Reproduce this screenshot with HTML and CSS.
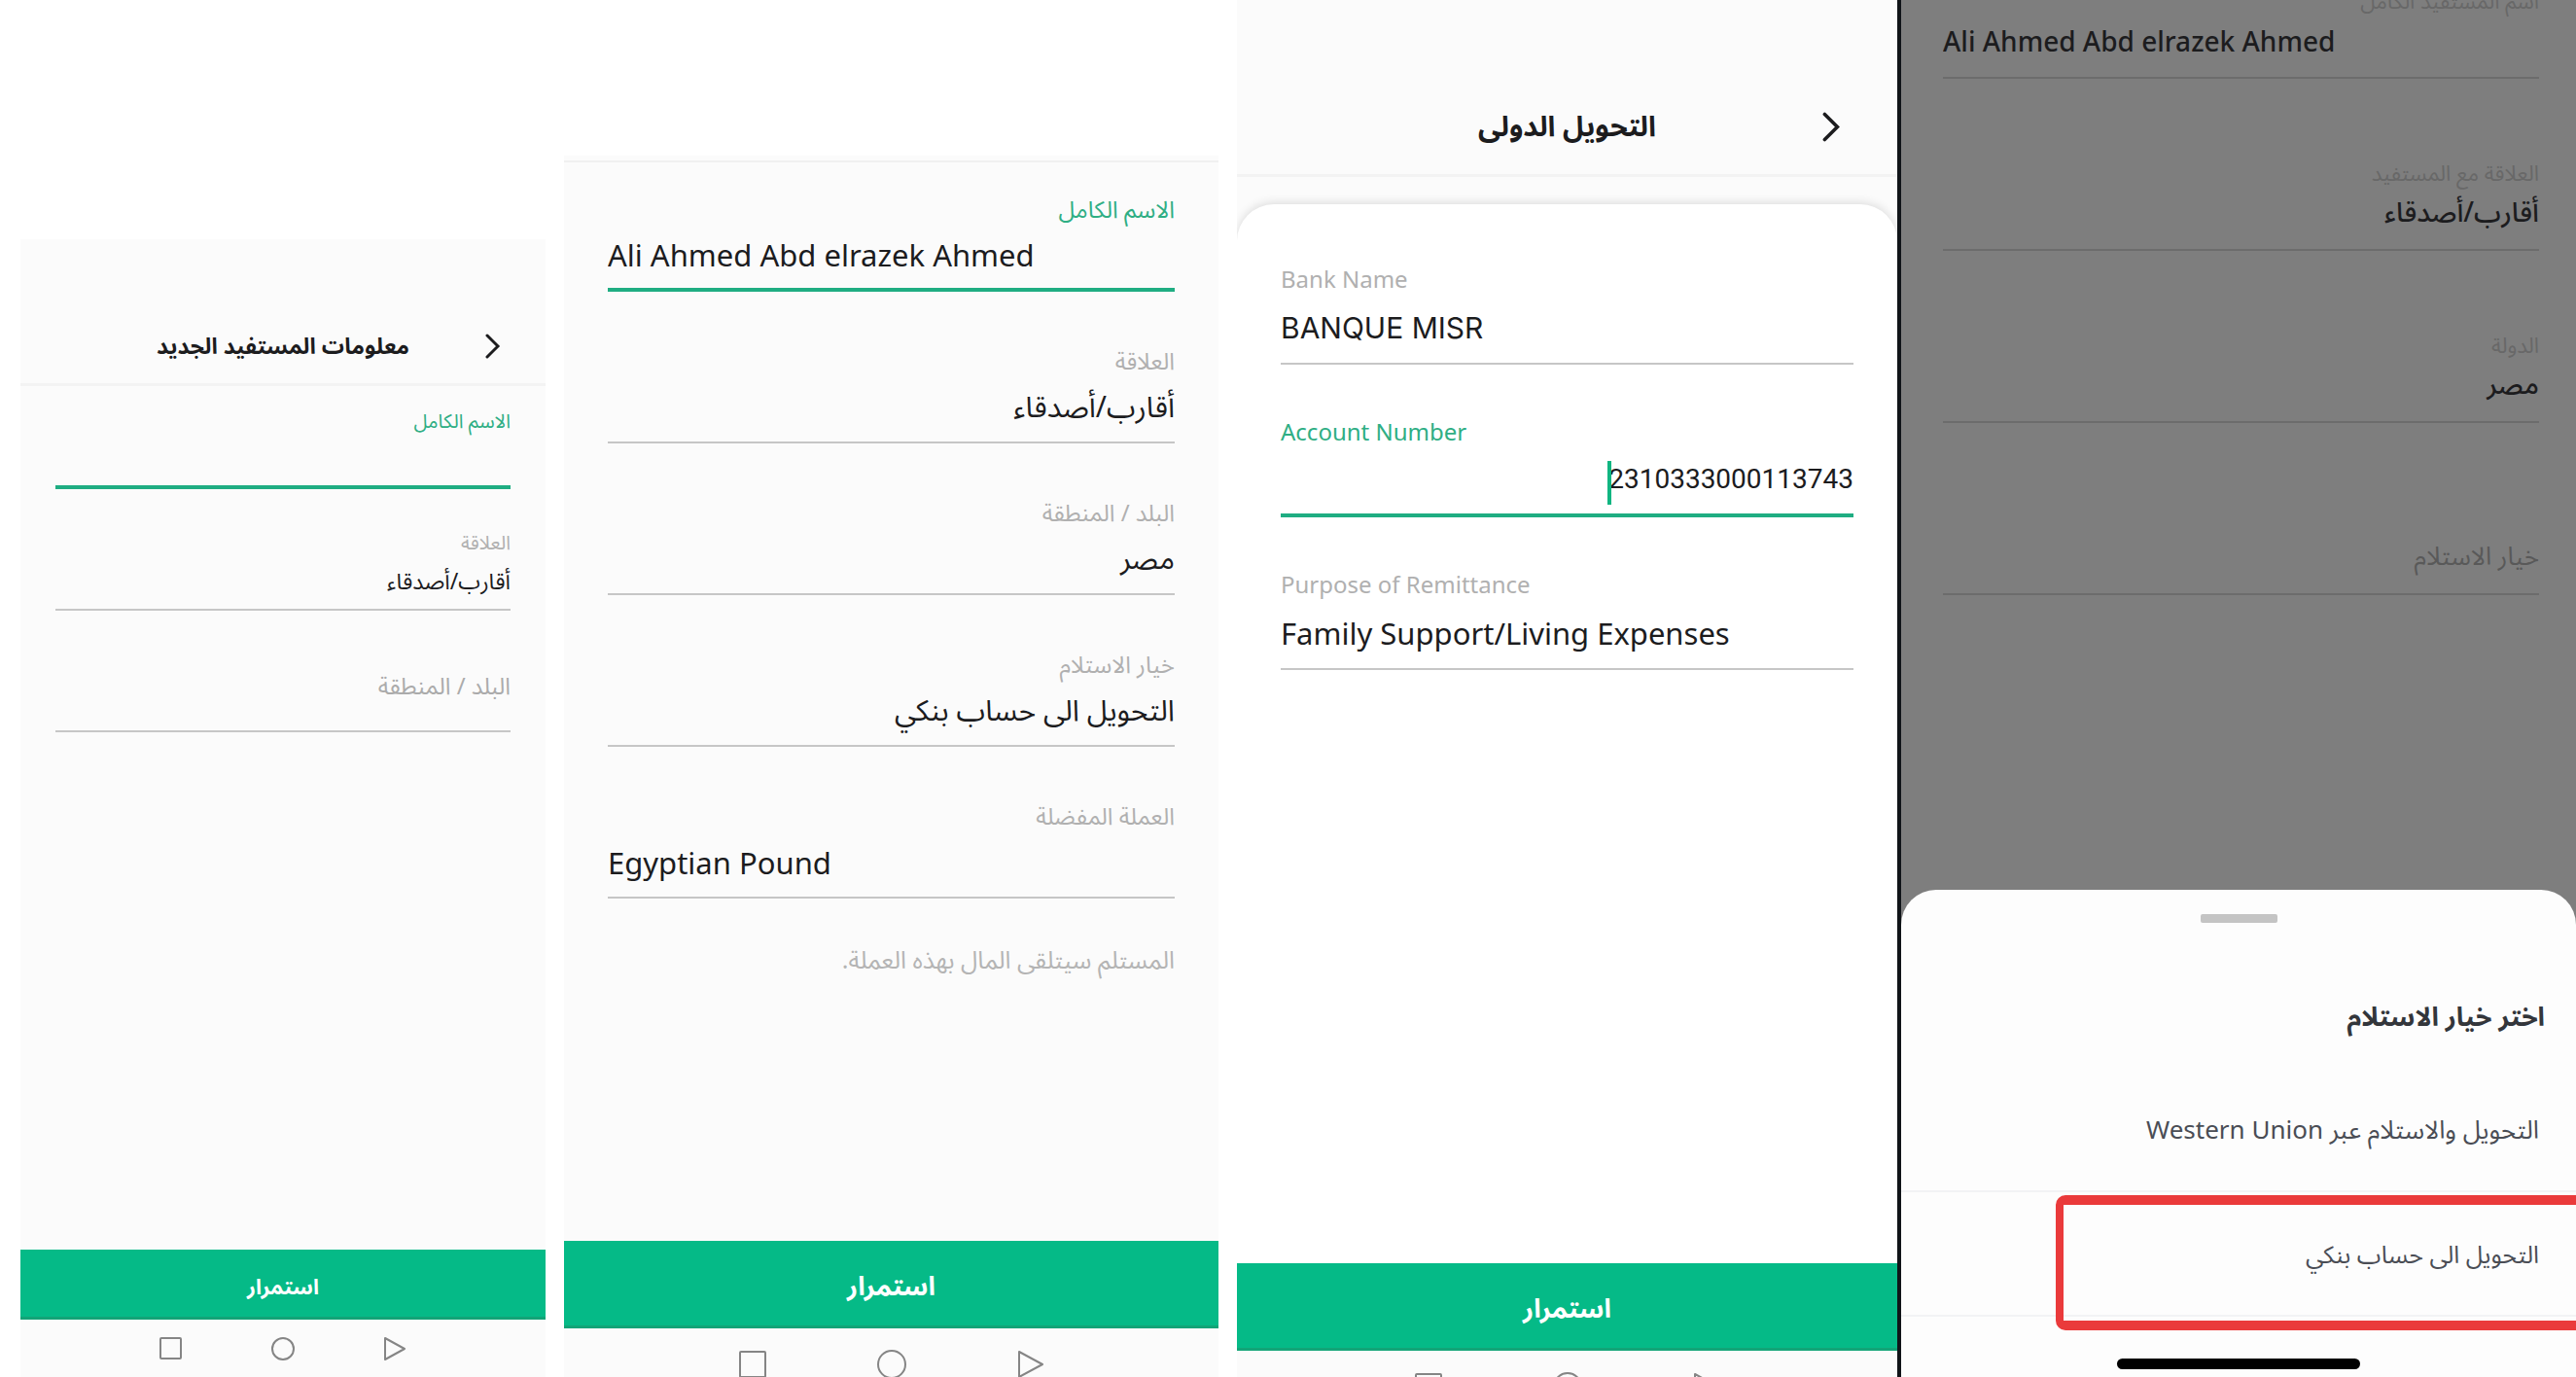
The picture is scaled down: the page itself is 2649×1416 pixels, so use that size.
FILE: index.html
```html
<!DOCTYPE html>
<html lang="ar">
<head>
<meta charset="utf-8">
<meta name="viewport" content="width=device-width, initial-scale=1">
<title>التحويل الدولى</title>
<link rel="stylesheet" href="styles.css">
</head>
<body>
<main class="board">

  <section class="screen screen-new" dir="rtl">
    <header class="topbar">
      <button class="back" type="button" aria-label="رجوع"><svg viewBox="0 0 16 26"><path d="M2 2l11 11L2 24"/></svg></button>
      <h1 class="title">معلومات المستفيد الجديد</h1>
    </header>
    <form class="fields">
      <div class="field active"><label for="n1">الاسم الكامل</label><input id="n1" type="text"></div>
      <div class="field"><label for="n2">العلاقة</label><input id="n2" type="text" value="أقارب/أصدقاء"></div>
      <div class="field"><input class="empty" type="text" aria-label="البلد / المنطقة" placeholder="البلد / المنطقة"></div>
    </form>
    <button class="continue" type="button">استمرار</button>
    <nav class="sysnav">
      <svg viewBox="0 0 24 26"><path d="M2 2l20 11L2 24z"/></svg>
      <svg viewBox="0 0 24 26"><ellipse cx="12" cy="13" rx="11" ry="11"/></svg>
      <svg viewBox="0 0 24 26"><rect x="1" y="2" width="21" height="21" rx="1"/></svg>
    </nav>
  </section>

  <section class="screen screen-details" dir="rtl">
    <form class="fields">
      <div class="field active"><label for="d1">الاسم الكامل</label><input id="d1" class="latin" type="text" dir="ltr" value="Ali Ahmed Abd elrazek Ahmed"></div>
      <div class="field"><label for="d2">العلاقة</label><input id="d2" type="text" value="أقارب/أصدقاء"></div>
      <div class="field"><label for="d3">البلد / المنطقة</label><input id="d3" type="text" value="مصر"></div>
      <div class="field"><label for="d4">خيار الاستلام</label><input id="d4" type="text" value="التحويل الى حساب بنكي"></div>
      <div class="field"><label for="d5">العملة المفضلة</label><input id="d5" class="latin" type="text" dir="ltr" value="Egyptian Pound"></div>
    </form>
    <p class="hint">المستلم سيتلقى المال بهذه العملة.</p>
    <button class="continue" type="button">استمرار</button>
    <nav class="sysnav">
      <svg viewBox="0 0 28 30"><path d="M2 2l24 13L2 28z"/></svg>
      <svg viewBox="0 0 28 30"><ellipse cx="14" cy="15" rx="14" ry="14"/></svg>
      <svg viewBox="0 0 28 30"><rect x="1" y="2" width="26" height="26" rx="1"/></svg>
    </nav>
  </section>

  <section class="screen screen-bank" dir="rtl">
    <header class="topbar">
      <button class="back" type="button" aria-label="رجوع"><svg viewBox="0 0 16 26"><path d="M2 2l11 11L2 24"/></svg></button>
      <h1 class="title">التحويل الدولى</h1>
    </header>
    <div class="card">
      <form class="fields" dir="ltr">
        <div class="field"><label for="b1">Bank Name</label><input id="b1" class="plain" type="text" value="BANQUE MISR"></div>
        <div class="field active"><label for="b2">Account Number</label><input id="b2" class="digits" type="text" dir="rtl" value="2310333000113743"><span class="caret"></span></div>
        <div class="field"><label for="b3">Purpose of Remittance</label><input id="b3" class="latin" type="text" value="Family Support/Living Expenses"></div>
      </form>
    </div>
    <button class="continue" type="button">استمرار</button>
    <nav class="sysnav">
      <svg viewBox="0 0 28 30"><path d="M2 2l24 13L2 28z"/></svg>
      <svg viewBox="0 0 28 30"><ellipse cx="14" cy="15" rx="14" ry="14"/></svg>
      <svg viewBox="0 0 28 30"><rect x="1" y="2" width="26" height="26" rx="1"/></svg>
    </nav>
  </section>

  <section class="screen screen-sheet" dir="rtl">
    <form class="fields">
      <div class="field"><label for="s1">اسم المستفيد الكامل</label><input id="s1" type="text" dir="ltr" value="Ali Ahmed Abd elrazek Ahmed"></div>
      <div class="field"><label for="s2">العلاقة مع المستفيد</label><input id="s2" type="text" value="أقارب/أصدقاء"></div>
      <div class="field"><label for="s3">الدولة</label><input id="s3" type="text" value="مصر"></div>
      <div class="field"><input class="empty" type="text" aria-label="خيار الاستلام" placeholder="خيار الاستلام"></div>
    </form>
    <div class="sheet">
      <span class="handle"></span>
      <h2 class="sheet-title">اختر خيار الاستلام</h2>
      <button class="option" type="button">التحويل والاستلام عبر Western Union</button>
      <button class="option marked" type="button">التحويل الى حساب بنكي</button>
      <span class="home"></span>
    </div>
  </section>

</main>
</body>
</html>
```
FILE: styles.css
```css
* { box-sizing: border-box; }

body {
  margin: 0;
  background: #fff;
  color: #1c1c1e;
  font-family: "Noto Sans", "Noto Sans Arabic", "DejaVu Sans", sans-serif;
}

button, input { font-family: inherit; color: inherit; margin: 0; }

.board {
  display: flex;
  min-height: 100vh;
  padding-left: 21px;
  overflow: hidden;
}

.screen {
  display: flex;
  flex-direction: column;
  min-width: 0;
  background: #fbfbfb;
}

/* header */
.topbar {
  display: grid;
  grid-template-columns: 1fr auto 1fr;
  align-items: center;
  border-bottom: 3px solid #f3f3f3;
}
.back {
  justify-self: start;
  display: flex;
  padding: 0;
  border: 0;
  background: none;
}
.back svg {
  width: 16px;
  height: 26px;
  fill: none;
  stroke: #1c1c1e;
  stroke-width: 3;
  stroke-linecap: round;
}
.title { margin: 0; font-weight: 700; white-space: nowrap; }

/* form fields */
.fields { display: flex; flex-direction: column; }
.field {
  position: relative;
  display: flex;
  flex-direction: column;
  justify-content: flex-end;
}
.field label {
  height: 24px;
  line-height: 22px;
  font-size: 24px;
  color: #b0b0b0;
  white-space: nowrap;
}
.field input {
  width: 100%;
  padding: 0;
  border: 0;
  border-bottom: 2px solid #c6c6c6;
  border-radius: 0;
  background: none;
  font-size: 30px;
  outline: 0;
}
.field input::placeholder { color: #ababab; opacity: 1; }
.field.active label { color: #2fae84; }
.field.active input { border-bottom: 4px solid #1fad82; }
.field .latin { font-size: 31px; }
.caret {
  position: absolute;
  right: 249px;
  bottom: 13px;
  width: 4px;
  height: 45px;
  background: #10b581;
}

/* primary button and system navigation */
.continue {
  margin-top: auto;
  padding: 8px 0 0;
  border: 0;
  border-bottom: 3px solid #12a477;
  background: #05ba87;
  color: #fff;
  font-weight: 700;
}
.sysnav {
  display: flex;
  justify-content: center;
  align-items: flex-start;
  overflow: hidden;
}
.sysnav svg {
  overflow: visible;
  fill: none;
  stroke: #858585;
  stroke-width: 2;
  stroke-linejoin: round;
}

/* new beneficiary */
.screen-new { flex: 540 1 0; margin-top: 246px; }
.screen-new .topbar { height: 151px; padding: 72px 46px 0; }
.screen-new .title { font-size: 23px; }
.screen-new .fields { gap: 47px; padding: 28px 36px 0; }
.screen-new .field { height: 78px; }
.screen-new .field label { height: 20px; line-height: 16px; font-size: 20px; }
.screen-new .field input { height: 58px; font-size: 23px; }
.screen-new .field .empty { height: 78px; padding-bottom: 18px; font-size: 24px; }
.screen-new .continue { height: 72px; font-size: 22px; }
.screen-new .sysnav { height: 59px; padding-top: 17px; gap: 91px; }
.screen-new .sysnav svg { width: 24px; height: 26px; }

/* beneficiary details */
.screen-details {
  flex: 673 1 0;
  margin: 160px 0 0 19px;
  padding-top: 5px;
}
.screen-details .fields {
  gap: 60px;
  padding: 37px 45px 0;
  border-top: 2px solid #f0f0f0;
}
.screen-details .field { height: 96px; }
.screen-details .field input { height: 72px; }
.hint {
  margin: 46px 45px 0;
  font-size: 25px;
  line-height: 32px;
  color: #b4b4b4;
}
.screen-details .continue,
.screen-bank .continue { height: 90px; font-size: 27px; }
.screen-details .sysnav { height: 50px; padding-top: 22px; }
.screen-details .sysnav,
.screen-bank .sysnav { gap: 115px; }
.screen-details .sysnav svg,
.screen-bank .sysnav svg { width: 28px; height: 30px; }

/* bank account */
.screen-bank { flex: 679 1 0; margin-left: 19px; }
.screen-bank .topbar { height: 182px; padding: 82px 58px 0; }
.screen-bank .back svg { width: 19px; height: 31px; }
.screen-bank .title { font-size: 29px; }
.card {
  flex: 1;
  margin-top: 28px;
  border-radius: 38px 38px 0 0;
  background: #fff;
  box-shadow: 0 -2px 10px #0000001f;
  clip-path: inset(-20px 0 0 0);
}
.screen-bank .fields { gap: 58px; padding: 66px 45px 0; }
.screen-bank .field { height: 99px; }
.screen-bank .field input { height: 75px; }
.field .plain { font-family: Inter, Roboto, sans-serif; }
.field .digits { font-family: Roboto, sans-serif; font-size: 28px; }
.screen-bank .sysnav { height: 27px; padding-top: 22px; }

/* delivery option sheet */
.screen-sheet {
  flex: 694 1 0;
  border-left: 4px solid #101418;
  background: #7e7e7e;
  overflow: hidden;
}
.screen-sheet .fields { gap: 85px; margin-top: -11px; padding: 0 38px 0 43px; }
.screen-sheet .field { height: 92px; }
.screen-sheet .field label { font-size: 22px; color: #686868; }
.screen-sheet .field input {
  height: 68px;
  padding-bottom: 8px;
  border-color: #6c6c6c;
  font-size: 28px;
  font-weight: 500;
}
.screen-sheet .field .empty { height: 76px; padding: 0 0 4px; font-size: 26px; }
.screen-sheet .field .empty::placeholder { color: #595959; font-weight: 400; }
.sheet {
  display: flex;
  flex-direction: column;
  height: 501px;
  margin-top: auto;
  padding-top: 25px;
  border-radius: 36px 36px 0 0;
  background: #fdfdfd;
}
.handle {
  align-self: center;
  width: 79px;
  height: 9px;
  border-radius: 2px;
  background: #c4c4c4;
}
.sheet-title {
  margin: 74px 32px 34px;
  font-size: 27px;
  line-height: 44px;
  font-weight: 700;
  color: #33363b;
}
.option {
  height: 125px;
  padding: 0 38px;
  border: 0;
  border-bottom: 2px solid #f2f3f5;
  background: none;
  font-size: 26px;
  color: #4a4d55;
  text-align: start;
  white-space: nowrap;
}
.marked { position: relative; height: 128px; padding-top: 4px; font-size: 25px; }
.marked::after {
  content: "";
  position: absolute;
  top: 3px;
  right: -12px;
  bottom: -16px;
  left: 159px;
  border: 10px solid #ea3a3b;
  border-left-width: 8px;
  border-radius: 10px;
}
.home {
  align-self: center;
  width: 250px;
  height: 11px;
  margin: auto 0 8px;
  border-radius: 6px;
  background: #000;
}
```
